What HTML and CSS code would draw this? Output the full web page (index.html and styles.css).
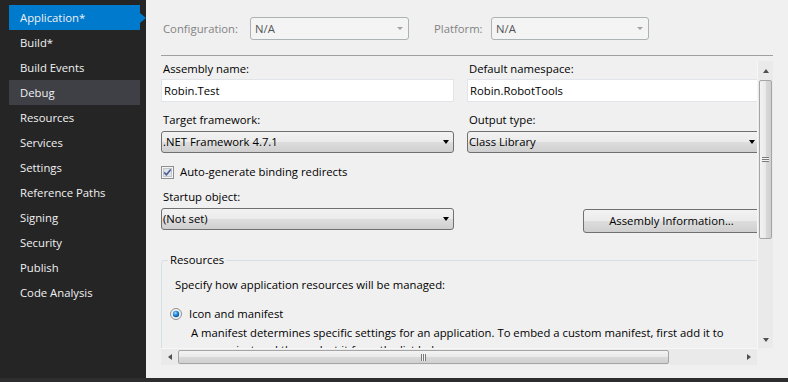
FILE: index.html
```html
<!DOCTYPE html>
<html lang="en">
<head>
    <meta charset="UTF-8">
    <meta name="viewport" content="width=device-width, initial-scale=1.0">
    <title>Robin.Test - Properties</title>
    <link rel="stylesheet" href="styles.css">
</head>
<body>
    <nav class="side">
        <div class="tab active">Application*</div>
        <div class="tab">Build*</div>
        <div class="tab">Build Events</div>
        <div class="tab hover">Debug</div>
        <div class="tab">Resources</div>
        <div class="tab">Services</div>
        <div class="tab">Settings</div>
        <div class="tab">Reference Paths</div>
        <div class="tab">Signing</div>
        <div class="tab">Security</div>
        <div class="tab">Publish</div>
        <div class="tab">Code Analysis</div>
    </nav>

    <main class="page">
        <div class="config-bar">
            <span class="cfg-label">Configuration:</span>
            <div class="combo disabled cfg-config">N/A<span class="arrow"></span></div>
            <span class="cfg-label cfg-platform-label">Platform:</span>
            <div class="combo disabled cfg-platform">N/A<span class="arrow"></span></div>
        </div>

        <div class="scroller">
            <div class="viewport">
                <div class="content">
                    <div class="row">
                        <div class="field">
                            <label>Assembly name:</label>
                            <div class="text-input">Robin.Test</div>
                        </div>
                        <div class="field">
                            <label>Default namespace:</label>
                            <div class="text-input">Robin.RobotTools</div>
                        </div>
                    </div>

                    <div class="row gap-10">
                        <div class="field">
                            <label>Target framework:</label>
                            <div class="combo">.NET Framework 4.7.1<span class="arrow"></span></div>
                        </div>
                        <div class="field">
                            <label>Output type:</label>
                            <div class="combo">Class Library<span class="arrow"></span></div>
                        </div>
                    </div>

                    <div class="check-row">
                        <svg class="checkbox" width="13" height="13" viewBox="0 0 13 13">
                            <rect x="0.5" y="0.5" width="12" height="12" fill="#f5f5f5" stroke="#8e8f8f"/>
                            <rect x="2.5" y="2.5" width="8" height="8" fill="#dfe3ea" stroke="#c2c6cd"/>
                            <path d="M3.2 6.4 L5.4 8.8 L9.8 3.4" fill="none" stroke="#4b5f95" stroke-width="1.6"/>
                        </svg>
                        <span>Auto-generate binding redirects</span>
                    </div>

                    <div class="row startup-row">
                        <div class="field">
                            <label>Startup object:</label>
                            <div class="combo">(Not set)<span class="arrow"></span></div>
                        </div>
                        <div class="field">
                            <button class="btn">Assembly Information...</button>
                        </div>
                    </div>

                    <fieldset class="group">
                        <legend>Resources</legend>
                        <div class="group-body">
                            <div>Specify how application resources will be managed:</div>
                            <div class="radio-row">
                                <svg class="radio" width="12" height="12" viewBox="0 0 12 12">
                                    <defs>
                                        <radialGradient id="dot" cx="0.4" cy="0.35" r="0.7">
                                            <stop offset="0" stop-color="#9fdcff"/>
                                            <stop offset="0.55" stop-color="#1d82d2"/>
                                            <stop offset="1" stop-color="#0c4b86"/>
                                        </radialGradient>
                                    </defs>
                                    <circle cx="6" cy="6" r="5.5" fill="#f3f3f3" stroke="#8e8f8f"/>
                                    <circle cx="6" cy="6" r="3.2" fill="url(#dot)"/>
                                </svg>
                                <span>Icon and manifest</span>
                            </div>
                            <div class="hint">A manifest determines specific settings for an application. To embed a custom manifest, first add it to<br>your project and then select it from the list below.</div>
                        </div>
                    </fieldset>
                </div>
            </div>

            <div class="vscroll">
                <div class="sb-btn"><span class="tri up"></span></div>
                <div class="thumb-v"><span class="grip-v"></span></div>
                <div class="sb-fill"></div>
                <div class="sb-btn"><span class="tri down"></span></div>
            </div>
            <div class="hscroll">
                <div class="sb-btn"><span class="tri left"></span></div>
                <div class="thumb-h"><span class="grip-h"></span></div>
                <div class="sb-fill"></div>
                <div class="sb-btn"><span class="tri right"></span></div>
            </div>
            <div class="corner"></div>
        </div>
    </main>
</body>
</html>
```

FILE: styles.css
```css
body {
    margin: 0;
    display: flex;
    height: 382px;
    overflow: hidden;
    background-color: #2d2d30;
    font-family: "Open Sans", "Noto Sans", sans-serif;
    font-size: 11.3px;
    line-height: 16px;
    color: #000;
}

/* left tab list */
.side {
    width: 146px;
    height: 378px;
    padding-top: 5px;
    box-sizing: border-box;
    background-color: #252526;
}

.tab {
    position: relative;
    width: 131px;
    height: 25px;
    margin-left: 9px;
    padding-left: 11px;
    box-sizing: border-box;
    line-height: 25px;
    color: #f1f1f1;
}

.tab.hover {
    background-color: #3f3f46;
}

.tab.active {
    background-color: #007acc;
}

.tab.active::after {
    content: "";
    position: absolute;
    right: -6px;
    top: 8px;
    border-top: 5px solid transparent;
    border-bottom: 5px solid transparent;
    border-left: 6px solid #007acc;
}

/* property page */
.page {
    flex: 1;
    height: 378px;
    padding: 0 15px;
    background-color: #f0f0f0;
}

.config-bar {
    display: flex;
    align-items: center;
    padding: 17px 0 15px;
    border-bottom: 1px solid #a0a0a0;
}

.cfg-label {
    width: 89px;
    padding-left: 2px;
    box-sizing: border-box;
    color: #838383;
}

.cfg-platform-label {
    width: 59px;
    margin-left: 23px;
}

.cfg-config {
    width: 159px;
}

.cfg-platform {
    width: 158px;
}

.combo {
    display: flex;
    align-items: center;
    justify-content: space-between;
    height: 22px;
    padding: 0 4px 0 1px;
    box-sizing: border-box;
    border: 1px solid #707070;
    border-radius: 3px;
    background: linear-gradient(#f2f2f2 0%, #ebebeb 48%, #dddddd 52%, #cfcfcf 100%);
}

.combo .arrow {
    border-left: 3.5px solid transparent;
    border-right: 3.5px solid transparent;
    border-top: 4px solid #000;
}

.combo.disabled {
    height: 23px;
    padding: 0 5px 0 4px;
    border-color: #adb2b5;
    background: #f4f4f4;
    color: #545454;
}

.combo.disabled .arrow {
    border-left-width: 3px;
    border-right-width: 3px;
    border-top: 3px solid #a2a2a2;
}

/* scrolling area */
.scroller {
    display: grid;
    grid-template-columns: 1fr 16px;
    grid-template-rows: 1fr 17px;
    height: 304px;
    margin-top: 5px;
}

.viewport {
    overflow: hidden;
}

.content {
    width: 700px;
}

.row {
    display: flex;
    gap: 13px;
}

.gap-10 {
    margin-top: 10px;
}

.field {
    display: flex;
    flex-direction: column;
    width: 293px;
}

.field label {
    padding-left: 2px;
    margin-bottom: 2px;
}

.gap-10 .field label,
.startup-row .field label {
    margin-bottom: 3px;
}

.text-input {
    height: 23px;
    padding-left: 2px;
    box-sizing: border-box;
    line-height: 21px;
    border: 1px solid #e1e5ea;
    background-color: #fff;
}

.check-row {
    display: flex;
    align-items: center;
    gap: 6px;
    margin-top: 11px;
}

.startup-row {
    margin-top: 9px;
}

.btn {
    width: 177px;
    height: 24px;
    margin: 20px 0 0 116px;
    padding: 0;
    font: inherit;
    color: #000;
    border: 1px solid #707070;
    border-radius: 3px;
    background: linear-gradient(#f2f2f2 0%, #ebebeb 48%, #dddddd 52%, #cfcfcf 100%);
}

.group {
    width: 690px;
    margin: 19px 0 0;
    padding: 9px 0 0 6px;
    border: 1px solid #d5dfe5;
    border-radius: 3px;
}

.group legend {
    padding: 0 2px;
    line-height: 16px;
}

.group-body {
    padding-left: 7px;
}

.radio-row {
    display: flex;
    align-items: center;
    gap: 7px;
    margin: 13px 0 0 -5px;
}

.hint {
    margin-top: 2px;
    padding-left: 16px;
    line-height: 17px;
    white-space: nowrap;
}

/* scroll bars */
.vscroll,
.hscroll {
    display: flex;
    background-color: #eaeaea;
}

.vscroll {
    flex-direction: column;
    border-left: 1px solid #f7f7f7;
}

.sb-btn {
    display: flex;
    align-items: center;
    justify-content: center;
    flex: 0 0 17px;
}

.vscroll .sb-btn:first-child {
    flex-basis: 19px;
}

.sb-fill {
    flex: 1;
}

.tri {
    width: 0;
    height: 0;
}

.tri.up {
    border-left: 3.5px solid transparent;
    border-right: 3.5px solid transparent;
    border-bottom: 4px solid #505050;
}

.tri.down {
    border-left: 3.5px solid transparent;
    border-right: 3.5px solid transparent;
    border-top: 4px solid #505050;
}

.tri.left {
    border-top: 3.5px solid transparent;
    border-bottom: 3.5px solid transparent;
    border-right: 4px solid #505050;
}

.tri.right {
    border-top: 3.5px solid transparent;
    border-bottom: 3.5px solid transparent;
    border-left: 4px solid #505050;
}

.thumb-v {
    display: flex;
    align-items: center;
    justify-content: center;
    height: 157px;
    margin: 0 1px 0 1px;
    border: 1px solid #a5a5a5;
    border-radius: 2px;
    background: linear-gradient(90deg, #f3f3f3 0%, #e9e9e9 50%, #d9d9d9 52%, #d0d0d0 100%);
}

.grip-v {
    width: 7px;
    height: 5px;
    background: repeating-linear-gradient(#7a7a7a 0 1px, #f4f4f4 1px 2px);
}

.hscroll {
    flex-direction: row;
    border-top: 1px solid #f7f7f7;
}

.thumb-h {
    display: flex;
    align-items: center;
    justify-content: center;
    width: 489px;
    margin: 1px 0;
    border: 1px solid #a5a5a5;
    border-radius: 2px;
    background: linear-gradient(#f3f3f3 0%, #e9e9e9 50%, #d9d9d9 52%, #d0d0d0 100%);
}

.grip-h {
    width: 5px;
    height: 7px;
    background: repeating-linear-gradient(90deg, #7a7a7a 0 1px, #f4f4f4 1px 2px);
}

.corner {
    background-color: #f0f0f0;
}
```
